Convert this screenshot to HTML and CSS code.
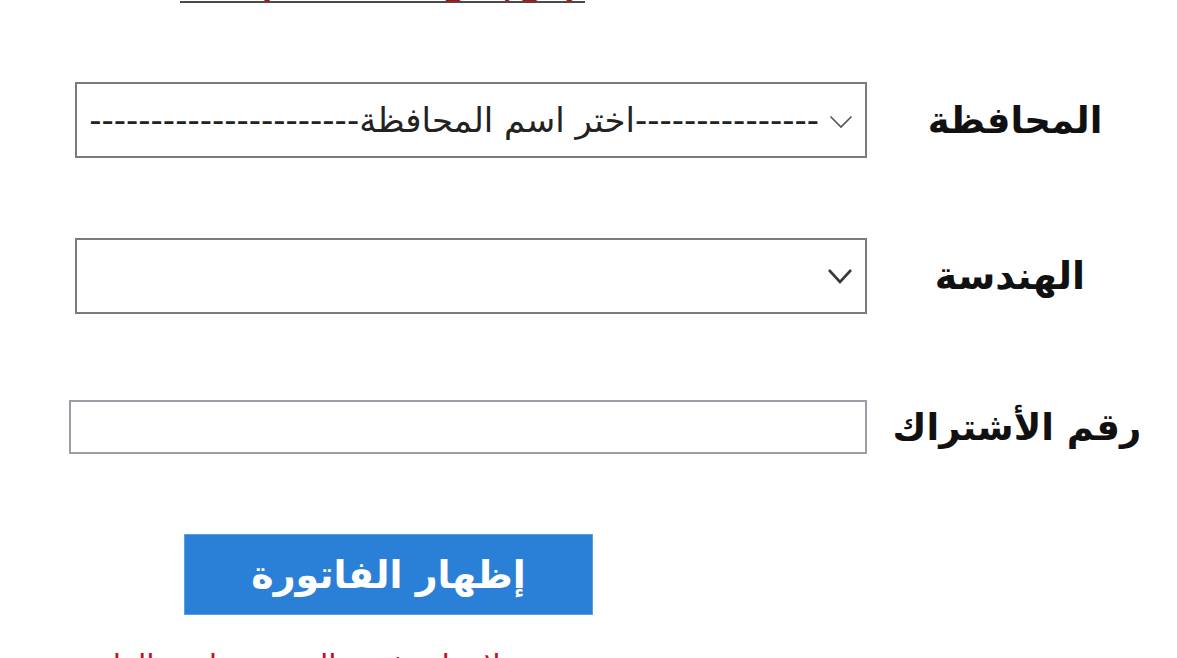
FILE: index.html
```html
<!DOCTYPE html>
<html lang="ar" dir="rtl">
<head>
<meta charset="utf-8">
<title>الاستعلام عن الفاتورة</title>
<link rel="stylesheet" href="styles.css">
</head>
<body>
<div class="page">
  <div class="top-note"><span class="top-note-text">يرجى إدخال البيانات المطلوبة بشكل صحيح</span></div>
  <form class="form">
    <div class="row row-gov">
      <label class="label" for="gov">المحافظة</label>
      <div class="field select-wrap">
        <select id="gov" class="select">
          <option>---------------اختر اسم المحافظة----------------------</option>
        </select>
        <svg class="chev chev-thin" width="24" height="14" viewBox="0 0 24 14"><path d="M1.5 1.5 L12 12 L22.5 1.5" fill="none" stroke="#555" stroke-width="1.6"/></svg>
      </div>
    </div>

    <div class="row row-eng">
      <label class="label label-eng" for="eng">الهندسة</label>
      <div class="field select-wrap">
        <select id="eng" class="select"><option></option></select>
        <svg class="chev chev-bold" width="26" height="18" viewBox="0 0 26 18"><path d="M2 3 L13 15 L24 3" fill="none" stroke="#3a3a3a" stroke-width="2.6"/></svg>
      </div>
    </div>

    <div class="row row-sub">
      <label class="label label-sub" for="sub">رقم الأشتراك</label>
      <div class="field input-wrap">
        <input id="sub" class="input" type="text">
      </div>
    </div>

    <div class="row row-btn">
      <div class="btn-cell">
        <button type="button" class="btn">إظهار الفاتورة</button>
      </div>
    </div>
  </form>
  <div class="bottom-note"><span class="bottom-note-text">ملاحظة: في حالة عدم ظهور الفاتورة يرجى التأكد من رقم الأشتراك</span></div>
</div>
</body>
</html>
```
FILE: styles.css
```css
html, body {
  margin: 0;
  padding: 0;
  background: #ffffff;
  overflow: hidden;
}
body {
  font-family: "DejaVu Sans", sans-serif;
  width: 1177px;
  height: 658px;
}
.page {
  width: 1177px;
  height: 658px;
  display: flex;
  flex-direction: column;
  overflow: hidden;
}
.top-note {
  height: 5px;
  overflow: hidden;
  display: flex;
  justify-content: flex-end;
  padding-left: 180px;
}
.top-note-text {
  display: block;
  width: 405px;
  overflow: hidden;
  margin-top: -21px;
  font-size: 24px;
  line-height: 24px;
  font-weight: bold;
  color: #d40000;
  border-bottom: 2px solid #4a4a4a;
  white-space: nowrap;
  text-align: center;
}
.form {
  display: flex;
  flex-direction: column;
  padding-right: 14px;
  margin-top: 79px;
}
.row {
  display: flex;
  align-items: center;
}
.row-eng { margin-top: 80px; }
.row-sub { margin-top: 86px; }
.row-btn { margin-top: 80px; }

.label {
  width: 296px;
  flex: none;
  text-align: center;
  font-weight: bold;
  font-size: 37px;
  color: #111;
  white-space: nowrap;
}
.label-eng { font-size: 38px; padding-right: 10px; box-sizing: border-box; }
.label-sub { font-size: 37px; padding-left: 4px; box-sizing: border-box; }

.select-wrap {
  position: relative;
  width: 792px;
  height: 76px;
}
.select {
  -webkit-appearance: none;
  appearance: none;
  box-sizing: border-box;
  width: 792px;
  height: 76px;
  border: 2px solid #7c7c7c;
  background: #fff;
  font-family: "DejaVu Sans", sans-serif;
  font-size: 34px;
  color: #222;
  padding: 0 46px 0 6px;
  direction: rtl;
  border-radius: 0;
  outline: none;
}
.chev {
  position: absolute;
  pointer-events: none;
}
.chev-thin { top: 33px; right: 14px; }
.chev-bold { top: 29px; right: 14px; }

.input-wrap {
  width: 798px;
  height: 54px;
}
.input {
  display: block;
  box-sizing: border-box;
  width: 798px;
  height: 54px;
  border: 2px solid #9aa0a6;
  background: #fff;
  border-radius: 0;
  outline: none;
  font-size: 24px;
  font-family: "DejaVu Sans", sans-serif;
}
.btn-cell {
  margin-right: 570px;
}
.btn {
  display: block;
  width: 409px;
  height: 81px;
  background: #2a80d6;
  border: 1px solid #5aa0e0;
  color: #fff;
  font-family: "DejaVu Sans", sans-serif;
  font-weight: bold;
  font-size: 38px;
  padding: 0;
  border-radius: 0;
}
.bottom-note {
  margin-top: 36px;
  height: 10px;
  overflow: hidden;
  display: flex;
  justify-content: flex-end;
}
.bottom-note-text {
  display: block;
  font-size: 30px;
  line-height: 30px;
  color: #cc0a22;
  white-space: nowrap;
  margin-left: -320px;
}
```
